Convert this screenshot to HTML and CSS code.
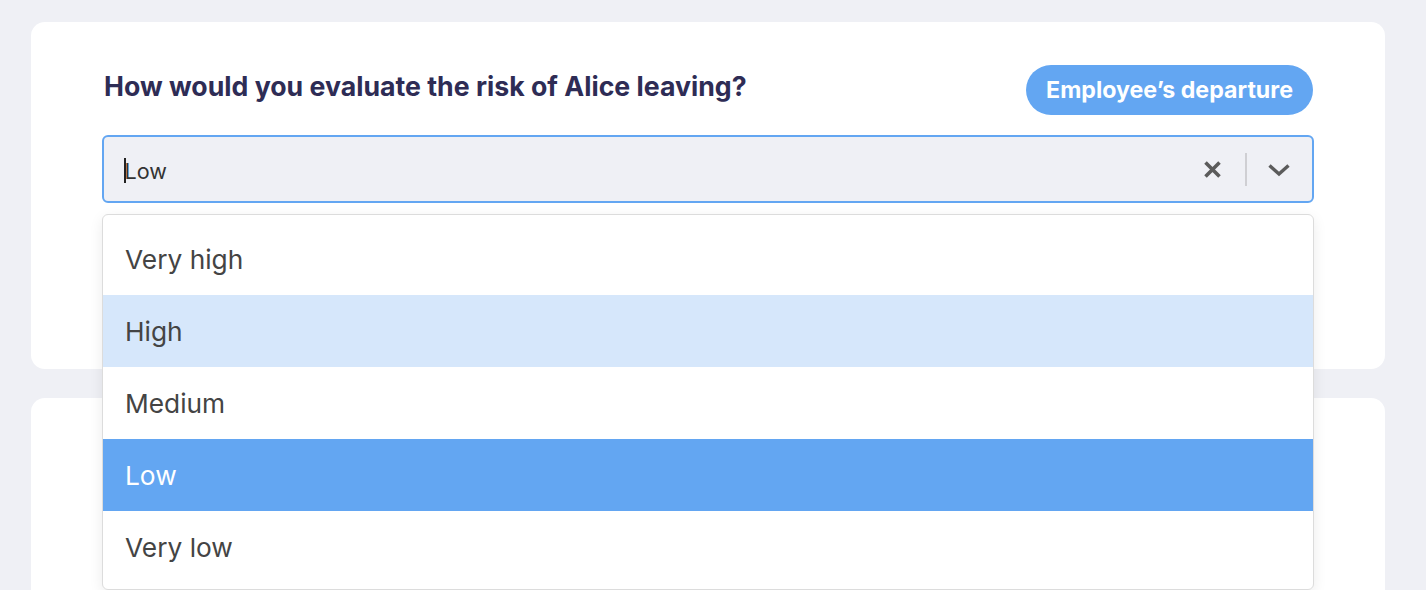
FILE: index.html
```html
<!DOCTYPE html>
<html lang="en">
<head>
<meta charset="utf-8">
<title>Risk evaluation</title>
<link rel="stylesheet" href="styles.css">
</head>
<body>
<main class="page">
  <section class="card card-question">
    <div class="question-head">
      <h2 class="question-title">How would you evaluate the risk of Alice leaving?</h2>
      <span class="badge">Employee’s departure</span>
    </div>
    <div class="select">
      <div class="select-control">
        <div class="select-value"><span class="caret"></span>Low</div>
        <div class="select-indicators">
          <svg class="icon-clear" width="19" height="19" viewBox="0 0 19 19" aria-hidden="true">
            <path d="M2.5 2.5 L16.5 16.5 M16.5 2.5 L2.5 16.5" stroke="#5b5b5b" stroke-width="3.6" fill="none"/>
          </svg>
          <span class="indicator-sep"></span>
          <svg class="icon-chevron" width="22" height="14" viewBox="0 0 22 14" aria-hidden="true">
            <path d="M1.5 2.5 L11 11 L20.5 2.5" stroke="#5b5b5b" stroke-width="3.4" fill="none"/>
          </svg>
        </div>
      </div>
      <ul class="select-menu">
        <li class="option">Very high</li>
        <li class="option option-focused">High</li>
        <li class="option">Medium</li>
        <li class="option option-selected">Low</li>
        <li class="option">Very low</li>
      </ul>
    </div>
  </section>
  <section class="card card-next"></section>
</main>
</body>
</html>
```

FILE: styles.css
```css
* { box-sizing: border-box; }
html, body {
  margin: 0;
  padding: 0;
  height: 100%;
  overflow: hidden;
}
body {
  background: #eff0f5;
  font-family: Inter, "Noto Sans", "Liberation Sans", sans-serif;
  color: #444;
}
.page {
  height: 100%;
  padding: 22px 41px 0 31px;
  display: flex;
  flex-direction: column;
  gap: 29px;
}
.card {
  background: #fff;
  border-radius: 14px;
}
.card-question {
  flex: 0 0 347px;
  padding: 43px 71px 0 71px;
}
.card-next {
  flex: 1 1 auto;
  border-radius: 14px 14px 0 0;
}
.question-head {
  display: flex;
  justify-content: space-between;
  align-items: flex-start;
}
.question-title {
  margin: 5px 0 0 2px;
  font-size: 26.7px;
  line-height: 32px;
  font-weight: 700;
  color: #2e2c55;
}
.badge {
  display: inline-flex;
  align-items: center;
  height: 50px;
  padding: 0 20px;
  margin-right: 1px;
  border-radius: 25px;
  background: #63a6f2;
  color: #fff;
  font-weight: 700;
  font-size: 23.2px;
}
.select {
  position: relative;
  margin-top: 20px;
}
.select-control {
  height: 68px;
  border: 2px solid #63a6f2;
  border-radius: 6px;
  background: #eff0f5;
  display: flex;
  align-items: center;
  justify-content: space-between;
  padding: 0 22px 0 20px;
}
.select-value {
  font-size: 21.6px;
  color: #333;
  display: flex;
  align-items: center;
  padding-top: 3px;
}
.caret {
  display: inline-block;
  width: 1.5px;
  height: 25px;
  background: #222;
  margin-right: -1px;
}
.select-indicators {
  display: flex;
  align-items: center;
}
.icon-clear { display: block; margin-right: 23px; }
.indicator-sep {
  display: block;
  width: 2px;
  height: 33px;
  background: #cfcfd3;
  margin-right: 21px;
}
.icon-chevron { display: block; margin-top: 1px; }
.select-menu {
  position: absolute;
  top: calc(100% + 11px);
  left: 0;
  right: 0;
  margin: 0;
  padding: 8px 0 6px;
  list-style: none;
  background: #fff;
  border: 1px solid #dcdcdc;
  border-radius: 6px;
  box-shadow: 0 4px 14px rgba(0, 0, 0, 0.08);
}
.option {
  height: 72px;
  display: flex;
  align-items: center;
  padding-left: 22px;
  font-size: 26.3px;
  color: #444;
}
.option-focused { background: #d6e7fb; }
.option-selected { background: #63a6f2; color: #fff; }
```
